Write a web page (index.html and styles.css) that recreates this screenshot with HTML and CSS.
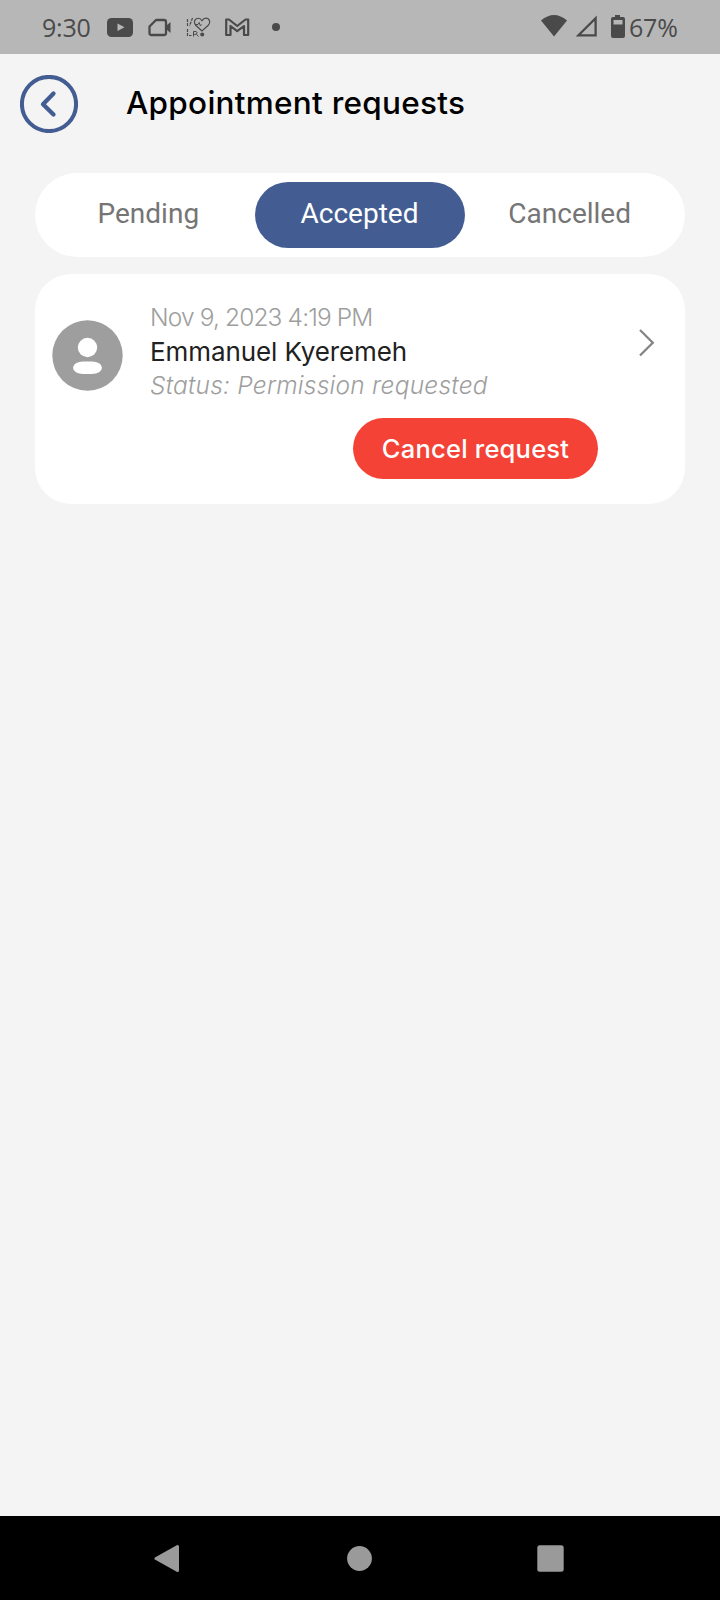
FILE: index.html
```html
<!DOCTYPE html>
<html lang="en">
<head>
<meta charset="utf-8">
<title>Appointment requests</title>
<link rel="stylesheet" href="styles.css">
</head>
<body>
<div class="screen">
  <div class="status-bar">
    <span class="clock">9:30</span>
    <svg class="notifications" width="180" height="54" viewBox="100 0 180 54">
      <rect x="107" y="18" width="26" height="19" rx="4.5" fill="#4a4a4a"/>
      <path d="M117.500 23.500v7.500l7-3.750z" fill="#b7b7b7"/>
      <path d="M156 20H164Q166 20 166 22V33Q166 35 164 35H151.500Q149.500 35 149.500 33V26.500Z" fill="none" stroke="#4a4a4a" stroke-width="2.300" stroke-linejoin="round"/>
      <path d="M166 26l4.500-4v11l-4.500-4z" fill="#4a4a4a"/>
      <g fill="none" stroke="#4a4a4a" stroke-width="1.200">
        <path d="M202 31l-6.500-6q-2.500-4 .8-6.300 3.600-1.500 5.700 2 2.500-3.700 6.200-2 2.800 2.500 .3 6.300z"/>
        <path d="M195 24.500h3l1.200-2 1.200 3.500 1-1.500" stroke-width="1"/>
        <path d="M192.500 18l-3 8M187.500 19v7M187.500 29v6.500h4" stroke-dasharray="3 1"/>
        <path d="M193.500 36.500v-5h2.700q1.800 1.300 0 2.800H194m2.500 0l2 2.200" stroke-width="1"/>
        <circle cx="202.200" cy="34.500" r="2" fill="#4a4a4a" stroke="none"/>
      </g>
      <path d="M226.200 19.500h2.800l8.200 6.500 8.300-6.500h2.700v15.500h-4.200v-9l-6.800 5.200-6.700-5.200V35h-4.300z" fill="none" stroke="#4a4a4a" stroke-width="2.200" stroke-linejoin="round"/>
      <circle cx="276" cy="27" r="4" fill="#4a4a4a"/>
    </svg>
    <svg class="signals" width="90" height="54" viewBox="538 0 90 54">
      <path d="M541 20.500Q554 9.500 567 20.500L554 36.500Z" fill="#4a4a4a"/>
      <path d="M578.500 35.300L595.600 18.200V35.300Z" fill="none" stroke="#4a4a4a" stroke-width="2.300"/>
      <path fill-rule="evenodd" d="M615 15h5v2h3q2 0 2 2v17q0 2-2 2h-10q-2 0-2-2V19q0-2 2-2h2zM613.500 20v4.500h9V20z" fill="#4a4a4a"/>
    </svg>
    <span class="battery">67%</span>
  </div>

  <header class="header">
    <svg width="58" height="58" viewBox="0 0 58 58" fill="none" stroke="#435d93">
      <circle cx="29" cy="29" r="27.100" stroke-width="4"/>
      <path d="M33.500 18.500L23 29.200 33.500 39.500" stroke-width="4.300" stroke-linecap="round" stroke-linejoin="round"/>
    </svg>
    <h1 class="title">Appointment requests</h1>
  </header>

  <nav class="tabs">
    <span class="tab">Pending</span>
    <span class="tab tab-active">Accepted</span>
    <span class="tab">Cancelled</span>
  </nav>

  <main class="card">
    <svg class="avatar" width="71" height="71" viewBox="0 0 71 71">
      <circle cx="35.500" cy="35.500" r="35.200" fill="#9e9e9e"/>
      <circle cx="35.500" cy="27.500" r="9.700" fill="#fff"/>
      <rect x="21" y="41.500" width="29" height="12.500" rx="10" ry="6.250" fill="#fff"/>
    </svg>
    <div class="details">
      <span class="date">Nov 9, 2023 4:19 PM</span>
      <span class="name">Emmanuel Kyeremeh</span>
      <span class="status">Status: Permission requested</span>
      <button class="cancel"><span class="cancel-label">Cancel request</span></button>
    </div>
    <svg class="chevron" width="18" height="30" viewBox="0 0 18 30">
      <path d="M2 2L14.800 14.700 2 27.500" fill="none" stroke="#858585" stroke-width="2.300"/>
    </svg>
  </main>

  <footer class="system-nav">
    <svg width="26" height="30" viewBox="0 0 26 30"><path d="M2 15.500L23.500 3.500V27.500Z" fill="#9a9a9a" stroke="#9a9a9a" stroke-width="3" stroke-linejoin="round"/></svg>
    <svg width="26" height="26" viewBox="0 0 26 26"><circle cx="13.500" cy="13.500" r="12.400" fill="#9a9a9a"/></svg>
    <svg width="27" height="27" viewBox="0 0 27 27"><rect x=".3" y=".3" width="26.400" height="26.400" rx="2.500" fill="#9a9a9a"/></svg>
  </footer>
</div>
</body>
</html>
```
FILE: styles.css
```css
* { box-sizing: border-box; }
body { margin: 0; background: #f4f4f4; font-family: Inter, sans-serif; }
svg { display: block; flex: none; }
.screen { width: 720px; height: 1600px; display: flex; flex-direction: column; }
.status-bar { height: 54px; flex: none; background: #b7b7b7; color: #4a4a4a; display: flex; align-items: center; padding-left: 41px; white-space: nowrap; }
.clock, .battery { font: 25px/54px "Open Sans", sans-serif; letter-spacing: -.2px; }
.clock { width: 59px; padding-left: 1px; }
.signals { margin-left: 258px; }
.battery { margin-left: 1px; }
.header { height: 119px; flex: none; padding: 21px 0 0 20px; display: flex; gap: 48px; }
.title { margin: 0; font-size: 31.500px; line-height: 55px; font-weight: 500; color: #000; letter-spacing: .27px; white-space: nowrap; }
.tabs { margin: 0 35px; height: 84px; flex: none; padding: 8.500px 10px 8.500px 8px; border-radius: 42px; background: #fff; display: grid; grid-template-columns: repeat(3, 1fr); font-family: Roboto, sans-serif; font-size: 28px; color: #757575; }
.tab { height: 66px; line-height: 64px; text-align: center; }
.tab-active { margin: 0 -1px 0 1px; padding-right: 1px; border-radius: 33px; background: #435d93; color: #fff; }
.card { margin: 17px 35px 0; height: 230px; flex: none; padding: 26px 29px 25px 17px; border-radius: 36px; background: #fff; display: flex; }
.avatar { margin-top: 19.500px; }
.details { width: 448px; flex: none; margin-left: 27px; display: flex; flex-direction: column; white-space: nowrap; }
.details > span { height: 34px; line-height: 34px; }
.date, .status { color: #9e9e9e; font-size: 24.500px; font-weight: 300; }
.date { letter-spacing: -.87px; }
.details > .name { color: #212121; font-size: 26px; line-height: 36px; letter-spacing: -.1px; }
.status { font-style: italic; letter-spacing: .22px; }
.cancel { align-self: flex-end; width: 245px; height: 61px; margin-top: 16px; padding: 0; border: 0; border-radius: 31px; background: #f44336; color: #fff; font: 500 25.500px/62px Inter, sans-serif; letter-spacing: .22px; }
.chevron { margin: 28px 0 0 40px; }
.system-nav { height: 84px; margin-top: auto; background: #000; display: flex; align-items: center; justify-content: space-between; padding: 0 156px 0 154px; }
```
